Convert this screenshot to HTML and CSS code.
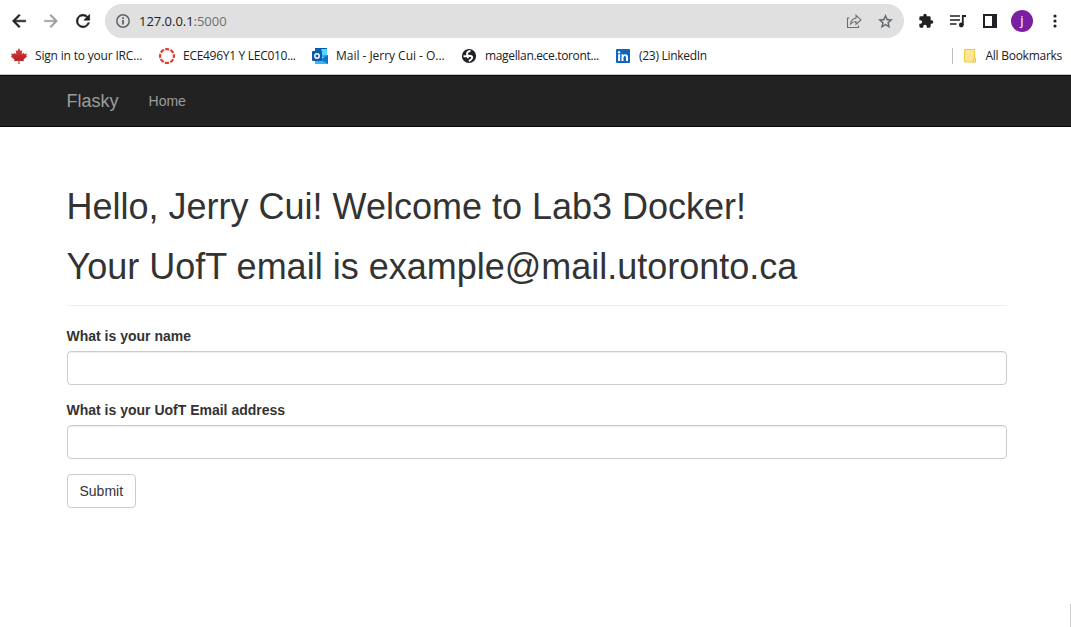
FILE: index.html
```html
<!DOCTYPE html>
<html lang="en">
<head>
<meta charset="utf-8">
<title>Flasky</title>
<link rel="stylesheet" href="styles.css">
</head>
<body>
<header class="browser">
  <div class="toolbar">
    <svg class="nav-icon" viewBox="0 0 24 24"><path d="M20 11H7.83l5.59-5.59L12 4l-8 8 8 8 1.41-1.41L7.83 13H20z" fill="#202124" stroke="#202124" stroke-width=".7"/></svg>
    <svg class="nav-icon" viewBox="0 0 24 24"><path d="M4 11h12.17l-5.59-5.59L12 4l8 8-8 8-1.41-1.41L16.17 13H4z" fill="#9b9b9b" stroke="#9b9b9b" stroke-width=".4"/></svg>
    <svg class="nav-icon" viewBox="0 0 24 24"><path d="M17.65 6.35A8 8 0 1 0 19.73 14h-2.08A6 6 0 1 1 12 6c1.66 0 3.14.69 4.22 1.78L13 11h7V4z" fill="#202124" stroke="#202124" stroke-width=".7"/></svg>
    <div class="omnibox">
      <svg class="info" viewBox="0 0 16 16"><circle cx="8" cy="8" r="6.2" fill="none" stroke="#5f6368" stroke-width="1.5"/><path d="M7.100 7h1.800v4.500H7.100zM7.100 4.300h1.800V6H7.100z" fill="#5f6368"/></svg>
      <span class="url">127.0.0.1<span class="port">:5000</span></span>
      <svg class="share" viewBox="0 0 16 16"><path d="M3.500 5H1.500v9.500h11V12.500M4.500 11C5 7.500 7 5.500 10 5.300V2.300L15 6.900 10 11.200V8.500C7.500 8.500 6 9.200 4.500 11z" fill="none" stroke="#6b6e72" stroke-width="1.100"/></svg>
      <svg class="star" viewBox="0 0 24 24"><path d="M22 9.24l-7.19-.62L12 2 9.190 8.630 2 9.240l5.460 4.730L5.820 21 12 17.270 18.180 21l-1.630-7.030zM12 15.400l-3.760 2.270 1-4.280-3.320-2.880 4.380-.38L12 6.100l1.710 4.040 4.380.38-3.320 2.880 1 4.280z" fill="#5f6368" stroke="#5f6368" stroke-width=".4"/></svg>
    </div>
    <svg class="ext" viewBox="0 0 24 24"><path d="M20.500 11H19V7a2 2 0 0 0-2-2h-4V3.500a2.500 2.500 0 0 0-5 0V5H4a2 2 0 0 0-2 2v3.800h1.500a2.700 2.700 0 0 1 0 5.400H2V20a2 2 0 0 0 2 2h3.800v-1.500a2.700 2.700 0 0 1 5.400 0V22H17a2 2 0 0 0 2-2v-4h1.500a2.500 2.500 0 0 0 0-5z" fill="#202124"/></svg>
    <svg class="media" viewBox="0 0 16 16"><path d="M0 3h10M0 7h10M0 11h6.500" stroke="#202124" stroke-width="1.600"/><path d="M12.800 12V3H16" fill="none" stroke="#202124" stroke-width="1.800"/><circle cx="11.300" cy="12" r="2.400" fill="#202124"/></svg>
    <svg class="panel" viewBox="0 0 14 14"><path d="M0 0h14v14H0zM2 2v10h7V2z" fill="#202124" fill-rule="evenodd"/></svg>
    <span class="avatar">j</span>
    <svg class="menu" viewBox="0 0 4 14"><circle cx="2" cy="2" r="1.600"/><circle cx="2" cy="7" r="1.600"/><circle cx="2" cy="12" r="1.600"/></svg>
  </div>
  <nav class="bookmarks">
    <a class="bookmark irc"><svg viewBox="0 0 16 16"><defs><linearGradient id="leaf" x2="0" y2="1"><stop offset="0" stop-color="#d64545"/><stop offset="1" stop-color="#b01212"/></linearGradient></defs><path d="M8 0l1.600 3 1.600-.8-.5 4 2-1.500.5 1.200L16 5.500l-.8 2.300.8.8-3.500 2.900.3 1.700-4.300-.5V16h-1v-3.300l-4.300.5.3-1.700L0 8.600l.8-.8L0 5.500l2.800.4.5-1.200 2 1.500-.5-4 1.600.8z" fill="url(#leaf)"/></svg><span>Sign in to your IRC...</span></a>
    <a class="bookmark ece"><svg viewBox="0 0 16 16"><circle cx="8" cy="8" r="6.900" fill="none" stroke="#e03c31" stroke-width="2.200" stroke-dasharray="4.100 1.319" stroke-dashoffset="2.050"/></svg><span>ECE496Y1 Y LEC010...</span></a>
    <a class="bookmark mail"><svg viewBox="0 0 16 16"><path d="M3 0h12v9H3z" fill="#28a8ea"/><path d="M3 0h12v1H3z" fill="#0358a7"/><path d="M3 1h6v4H3z" fill="#0364b8"/><path d="M10 1h5v6h-5z" fill="#50d9ff"/><path d="M3 8l7 2 6-3v9H3z" fill="#1490df"/><path d="M16 7v9l-6-5z" fill="#1172c4"/><path d="M3 13h7l6 3H3z" fill="#35b8f1"/><rect y="3" width="10" height="10" rx="1" fill="#0f5bab"/><circle cx="5" cy="8" r="2.200" fill="none" stroke="#fff" stroke-width="1.500"/></svg><span>Mail - Jerry Cui - O...</span></a>
    <a class="bookmark mag"><svg viewBox="0 0 16 16"><circle cx="8" cy="8" r="7.100" fill="#202124"/><path d="M9.500 3C7.500 3 6 4 6 5.800S8 8 9.500 8s2 1 1.400 2.300S9 12.500 7.800 13M2.500 8.300h3c1.200 0 1.500.8 1.500 2" fill="none" stroke="#fff" stroke-width="1.900"/></svg><span>magellan.ece.toront...</span></a>
    <a class="bookmark lin"><svg viewBox="0 0 16 16"><rect x="1" y="1" width="14" height="14" rx="1" fill="#0a66c2"/><path d="M3.100 6.300h2V13h-2zM6.500 6.300h2v1C9.600 5.400 13 5.700 13 9v4h-2V9.500c0-2.200-2.500-2-2.500 0V13h-2z" fill="#fff"/><circle cx="4.100" cy="4.200" r="1.200" fill="#fff"/></svg><span>(23) LinkedIn</span></a>
    <a class="bookmark all"><svg viewBox="0 0 16 16"><path d="M2.500 1.500h10v9h1v3.500h-11z" fill="#ffe591" stroke="#ecc94b"/><path d="M11.500 14v-3.500h2V14z" fill="#ffe591" stroke="#ecc94b"/></svg><span>All Bookmarks</span></a>
  </nav>
</header>
<nav class="navbar">
  <a class="brand">Flasky</a>
  <a class="nav-link">Home</a>
</nav>
<main class="container">
  <div class="page-header">
    <h1>Hello, Jerry Cui! Welcome to Lab3 Docker!</h1>
    <h1>Your UofT email is example@mail.utoronto.ca</h1>
  </div>
  <form class="form">
    <div class="form-group"><label for="name">What is your name</label><input class="control" id="name" type="text"></div>
    <div class="form-group"><label for="email">What is your UofT Email address</label><input class="control" id="email" type="text"></div>
    <button class="submit" type="button">Submit</button>
  </form>
</main>
<div class="edge"></div>
</body>
</html>
```
FILE: styles.css
```css
* { box-sizing: border-box; }
body {
  margin: 0;
  height: 627px;
  overflow: hidden;
  display: flex;
  flex-direction: column;
  background: #fff;
  color: #333;
  font: 14px/20px "Liberation Sans", Arial, sans-serif;
}
svg { display: block; flex: none; }

.browser {
  height: 75px;
  flex: none;
  border-bottom: 1px solid #c8c8c8;
  font-family: "Open Sans", "Noto Sans", sans-serif;
}
.toolbar { height: 42px; display: flex; align-items: center; padding-left: 9px; }
.nav-icon { width: 20px; height: 20px; margin-right: 12px; }
.omnibox {
  width: 799px;
  height: 34px;
  border-radius: 17px;
  background: #e0e0e0;
  display: flex;
  align-items: center;
  padding: 0 10px;
}
.info { width: 16px; height: 16px; }
.url { margin-left: 8px; flex: 1; font-size: 13px; color: #202124; letter-spacing: -.03px; }
.port { color: #6b6e72; }
.share { width: 16px; height: 16px; margin-right: 15px; }
.star { width: 17px; height: 17px; }
.ext { width: 16px; height: 16px; margin-left: 14px; }
.media { width: 16px; height: 16px; margin-left: 16px; }
.panel { width: 14px; height: 14px; margin-left: 17px; }
.avatar {
  width: 22px;
  height: 22px;
  margin-left: 14px;
  border-radius: 50%;
  background: #7b1fa2;
  color: #fff;
  font: 13px/21px "Open Sans", sans-serif;
  text-align: center;
}
.menu { width: 4px; height: 14px; margin-left: 20px; fill: #202124; }

.bookmarks { height: 28px; display: flex; align-items: center; padding-left: 11px; }
.bookmark { display: flex; align-items: center; gap: 8px; font-size: 12px; line-height: 16px; color: #202124; white-space: nowrap; }
.bookmark svg { width: 16px; height: 16px; }
.irc { width: 148px; letter-spacing: -.18px; }
.ece { width: 153px; letter-spacing: -.29px; }
.mail { width: 149px; letter-spacing: -.03px; }
.mag { width: 154px; letter-spacing: -.34px; }
.lin { width: 92px; letter-spacing: -.29px; }
.all { margin-left: auto; margin-right: 9px; padding-left: 9px; border-left: 1px solid #bdbdbd; letter-spacing: -.27px; }

.navbar {
  height: 52px;
  flex: none;
  display: flex;
  align-items: center;
  gap: 30px;
  padding-left: 66.500px;
  background: #222;
  border: solid #080808;
  border-width: 1px 0;
  color: #9d9d9d;
}
.brand { font-size: 18px; }

.container { width: 940px; margin: 60px 0 0 66.500px; }
.page-header { padding-bottom: 9px; margin-bottom: 20px; border-bottom: 1px solid #eee; }
h1 { margin: 0 0 10px; font-size: 36px; font-weight: 500; line-height: 39.600px; }
h1 + h1 { margin-top: 20px; }
.form-group { margin-bottom: 15px; }
label { display: block; margin-bottom: 5px; font-weight: 700; }
.control {
  display: block;
  width: 100%;
  height: 34px;
  border: 1px solid #ccc;
  border-radius: 4px;
  box-shadow: inset 0 1px 1px rgba(0, 0, 0, .075);
}
.submit {
  display: block;
  height: 34px;
  padding: 6px 12px;
  border: 1px solid #ccc;
  border-radius: 4px;
  background: #fff;
  color: #333;
  font: inherit;
}
.edge { width: 1px; height: 23px; margin: auto 0 0 auto; background: #ccc; }
```
